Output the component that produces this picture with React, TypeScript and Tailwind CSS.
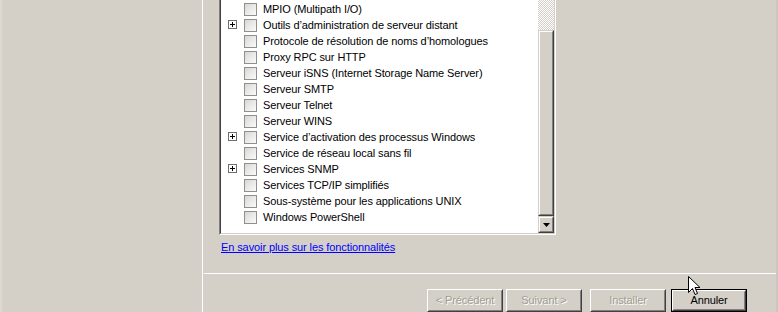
import React from "react";

const rows: [string, boolean][] = [
  ["MPIO (Multipath I/O)", false],
  ["Outils d’administration de serveur distant", true],
  ["Protocole de résolution de noms d’homologues", false],
  ["Proxy RPC sur HTTP", false],
  ["Serveur iSNS (Internet Storage Name Server)", false],
  ["Serveur SMTP", false],
  ["Serveur Telnet", false],
  ["Serveur WINS", false],
  ["Service d’activation des processus Windows", true],
  ["Service de réseau local sans fil", false],
  ["Services SNMP", true],
  ["Services TCP/IP simplifiés", false],
  ["Sous-système pour les applications UNIX", false],
  ["Windows PowerShell", false],
];

function PlusBox() {
  return (
    <svg width="9" height="9" viewBox="0 0 9 9" className="block">
      <rect x="0.5" y="0.5" width="8" height="8" fill="#fff" stroke="#6f6f6f" />
      <path d="M2 4.5h5M4.5 2v5" stroke="#000" strokeWidth="1" />
    </svg>
  );
}

function Row({ label, plus }: { label: string; plus: boolean }) {
  return (
    <div className="flex h-4 items-start">
      <div className="w-[23px] pl-[7px] pt-[3px]">{plus ? <PlusBox /> : null}</div>
      <div className="mt-[2px] w-[13px] h-[13px] border border-[#8e8f8f] bg-linear-to-br from-[#d8d8d3] to-[#fbfbfa]" />
      <div className="ml-[6px] leading-4 text-black whitespace-nowrap">{label}</div>
    </div>
  );
}

function Raised({ className, children }: { className?: string; children?: React.ReactNode }) {
  return (
    <div className={"border border-t-[#d4d0c8] border-l-[#d4d0c8] border-b-[#404040] border-r-[#404040] " + (className ?? "")}>
      <div className="w-full h-full border border-t-white border-l-white border-b-[#808080] border-r-[#808080] bg-[#d4d0c8] flex items-center justify-center">
        {children}
      </div>
    </div>
  );
}

function WinButton({ label, disabled, def, className }: { label: string; disabled?: boolean; def?: boolean; className?: string }) {
  const inner = (
    <div className="w-full h-full border border-t-white border-l-white border-b-[#404040] border-r-[#404040]">
      <div className="w-full h-full border border-t-[#d4d0c8] border-l-[#d4d0c8] border-b-[#808080] border-r-[#808080] flex items-center justify-center">
        <span
          className={
            disabled
              ? "text-[#a19d94] [text-shadow:1px_1px_0_#ffffff]"
              : "text-black"
          }
        >
          {label}
        </span>
      </div>
    </div>
  );
  return (
    <div className={"h-[23px] bg-[#d4d0c8] " + (def ? "border border-black " : "") + (className ?? "")}>
      {inner}
    </div>
  );
}

export default function App() {
  return (
    <div className="relative w-[778px] h-[312px] overflow-hidden bg-[#d4d0c8] flex font-['Liberation_Sans',Arial,sans-serif] text-[11px] tracking-[-0.1px]">
      {/* left panel */}
      <div className="w-[202px] h-full bg-[#d4d0c8] border-l-2 border-[#dcd9d3]" />
      <div className="w-px h-full bg-white" />
      {/* right area */}
      <div className="flex-1 flex flex-col">
        <div className="pl-4 -mt-[10px]">
          {/* list box, sunken */}
          <div className="w-[337px] h-[245px] border border-t-[#808080] border-l-[#808080] border-b-white border-r-white">
            <div className="w-full h-full border border-t-[#404040] border-l-[#404040] border-b-[#d4d0c8] border-r-[#d4d0c8] flex">
              <div className="flex-1 bg-white pt-[9px]">
                {rows.map(([l, p]) => (
                  <Row key={l} label={l} plus={p} />
                ))}
              </div>
              <div className="w-4 flex flex-col">
                <div className="h-[38px] bg-[image:repeating-conic-gradient(#d4d0c8_0%_25%,#ffffff_0%_50%)] bg-[length:2px_2px]" />
                <Raised className="h-[186px]" />
                <Raised className="h-[17px]">
                  <svg width="7" height="4" viewBox="0 0 7 4" className="block">
                    <path d="M0 0h7L3.5 4z" fill="#000" />
                  </svg>
                </Raised>
              </div>
            </div>
          </div>
        </div>
        <div className="pl-[18px] mt-[6px] leading-[13px] h-[13px]">
          <span className="text-[#0000ff] underline">En savoir plus sur les fonctionnalités</span>
        </div>
        <div className="mt-[19px] ml-px h-px bg-white" />
        <div className="mt-[15px] flex pl-[224px]">
          <WinButton label="< Précédent" disabled className="w-[76px]" />
          <WinButton label="Suivant >" disabled className="w-[76px] ml-[3px]" />
          <WinButton label="Installer" disabled className="w-[76px] ml-[8px]" />
          <WinButton label="Annuler" def className="w-[76px] ml-[5px]" />
        </div>
      </div>
      <div className="w-[2px] h-full bg-[#ccc8c0]" />
      {/* mouse cursor */}
      <svg
        width="13"
        height="21"
        viewBox="0 0 13 21"
        className="absolute left-[688px] top-[276px]"
      >
        <path
          d="M0.5 0.5V16.5L4.5 12.5L7 18.5L9.5 17.5L7 11.5H12Z"
          fill="#fff"
          stroke="#000"
          strokeWidth="1"
          strokeLinejoin="miter"
        />
      </svg>
    </div>
  );
}
